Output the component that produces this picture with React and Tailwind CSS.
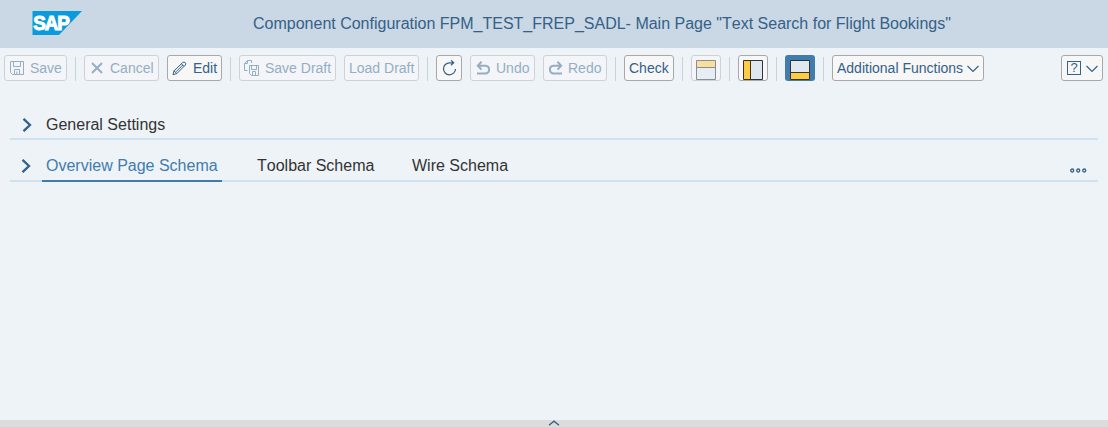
import React from "react";

function Button({ className = "", disabled = false, children }) {
  const tone = disabled
    ? "border-[#cfd2d5] bg-[#f3f5f9] text-[#95aec4]"
    : "border-[#a6a8aa] bg-[#f7f7f8] text-[#346187]";
  return (
    <button
      className={`flex h-[26px] shrink-0 items-center rounded-[3px] border text-sm leading-4 whitespace-nowrap ${tone} ${className}`}
    >
      {children}
    </button>
  );
}

function Separator() {
  return <div className="mt-[2px] h-6 w-px shrink-0 bg-[#cbd1d6]" />;
}

function Icon({ w, h, className = "", children, sw = 1 }) {
  return (
    <svg
      width={w}
      height={h}
      viewBox={`0 0 ${w} ${h}`}
      fill="none"
      stroke="currentColor"
      strokeWidth={sw}
      className={`shrink-0 ${className}`}
    >
      {children}
    </svg>
  );
}

function Logo() {
  return (
    <svg width="50" height="24" viewBox="0 0 50 24" className="shrink-0">
      <path d="M0.5 0H50L27 24H0.5Z" fill="#0a9bdc" />
      <text
        x="1.2"
        y="19.4"
        textLength="35.4"
        lengthAdjust="spacingAndGlyphs"
        fill="#fff"
        stroke="#fff"
        strokeWidth="1"
        className="font-['Liberation_Sans',sans-serif] text-[20px] font-bold tracking-[-1.2px]"
      >
        SAP
      </text>
    </svg>
  );
}

function LayoutIcon({ band, stroke, fill, pane }) {
  const bands = {
    top: [<rect key="b" x="0.5" y="0.5" width="19" height="7" />, "M0 7.5H20"],
    left: [<rect key="b" x="0.5" y="0.5" width="7" height="19" />, "M7.5 0V20"],
    bottom: [<rect key="b" x="0.5" y="12.5" width="19" height="7" />, "M0 12.5H20"],
  };
  return (
    <svg width="20" height="20" viewBox="0 0 20 20" className="mt-1 shrink-0">
      <rect x="0.5" y="0.5" width="19" height="19" fill={pane} />
      <g fill={fill}>{bands[band][0]}</g>
      <path d={`M0.5 0.5H19.5V19.5H0.5Z ${bands[band][1]}`} fill="none" stroke={stroke} />
    </svg>
  );
}

function Chevron({ className = "" }) {
  return (
    <Icon w={10} h={14} sw={2.3} className={`text-[#346187] ${className}`}>
      <path d="M1.5 0.8 8 7 1.5 13.2" />
    </Icon>
  );
}

export default function App() {
  return (
    <div className="flex h-[427px] w-[1108px] flex-col overflow-hidden bg-[#eef3f8] font-['Liberation_Sans',Arial,sans-serif] text-[#333] [font-kerning:none]">
      <header className="flex h-12 shrink-0 bg-[#cad7e5] pt-[11px] pl-8">
        <Logo />
        <h1 className="mt-1 ml-[171px] text-base leading-[18px] whitespace-nowrap text-[#346187]">
          Component Configuration FPM_TEST_FREP_SADL- Main Page "Text Search for Flight Bookings"
        </h1>
      </header>

      <div className="flex h-[43px] shrink-0 gap-2 pt-[7px] pr-[5px] pl-1">
        <Button disabled className="w-[63px] pl-[5px]">
          <Icon w={14} h={14} className="mr-1.5">
            <path d="M.5.5H13.5V13.5H2.5L.5 11.5ZM3.5.5V5.5H10.5V.5M4.5 13.5V8.5H9.5V13.5M6.8 10.5V13" />
          </Icon>
          Save
        </Button>
        <Separator />
        <Button disabled className="w-[75px] pl-[6px]">
          <Icon w={12} h={12} sw={2} className="mr-[7px]">
            <path d="M1 1 11 11M11 1 1 11" />
          </Icon>
          Cancel
        </Button>
        <Button className="w-[55px] pl-1">
          <Icon w={15} h={15} className="mr-1.5">
            <path d="M1 13.7 2 9.8 10.7 1.6Q12 .5 13.2 1.6T13.2 4.2L4.8 12.6ZM2 9.8 4.8 12.6M9.5 2.8 12 5.3M4 10.8 10.8 4" />
          </Icon>
          Edit
        </Button>
        <Separator />
        <Button disabled className="w-[97px] pl-1">
          <Icon w={16} h={16} className="mr-[5px]">
            <path d="M5.5 5.5H14.5V15.5H7.5L5.5 13.5ZM7.5 5.5V9.5H12.5V5.5M8.5 15.5V11.5H11.5V15.5M3.5 10.5H.5V3.5L3.5.5H7.5V3M.5 3.5H3.5V.5" />
          </Icon>
          Save Draft
        </Button>
        <Button disabled className="w-[75px] pl-1">
          Load Draft
        </Button>
        <Separator />
        <Button className="w-[26px] pl-[5px]">
          <Icon w={15} h={16} sw={1.2}>
            <path d="M11.2 2.8H7.5A6 6 0 1 0 13.5 9M9 .3 11.7 2.8 9 5.3" />
          </Icon>
        </Button>
        <Button disabled className="w-[65px] pl-[5px]">
          <Icon w={14} h={14} sw={2} className="mr-[6px]">
            <path d="M5.5.8 1.8 4.7 5.5 8.6M2 4.7H9.2C14.4 4.7 14.4 12.5 9.2 12.5H1" />
          </Icon>
          Undo
        </Button>
        <Button disabled className="w-16 pl-[5px]">
          <Icon w={14} h={14} sw={2} className="mr-[5px]">
            <path d="M8.5.8 12.2 4.7 8.5 8.6M12 4.7H4.8C-.4 4.7-.4 12.5 4.8 12.5H13" />
          </Icon>
          Redo
        </Button>
        <Separator />
        <Button className="w-[50px] pl-1">Check</Button>
        <Separator />
        <Button disabled className="w-[30px] justify-center">
          <LayoutIcon band="top" stroke="#8b8e92" fill="#f8e09a" pane="#e6edf5" />
        </Button>
        <Separator />
        <Button className="w-[30px] justify-center">
          <LayoutIcon band="left" stroke="#333" fill="#ffcc3d" pane="#dfe8f1" />
        </Button>
        <Separator />
        <button className="flex h-[26px] w-[30px] shrink-0 items-center justify-center rounded-[3px] bg-[#427cac]">
          <LayoutIcon band="bottom" stroke="#333" fill="#ffcc3d" pane="#dfe8f1" />
        </button>
        <Separator />
        <Button className="w-[152px] pl-1">
          Additional Functions
          <Icon w={12} h={8} sw={1.2} className="mt-[2px] ml-1">
            <path d="M.5 1 6 6.5 11.5 1" />
          </Icon>
        </Button>
        <Button className="ml-auto w-[42px] pl-[5px]">
          <span className="flex h-[14px] w-[14px] items-center justify-center border border-[#346187] text-[13px] leading-3">
            ?
          </span>
          <Icon w={12} h={8} sw={1.2} className="mt-[2px] ml-[5px]">
            <path d="M.5 1 6 6.5 11.5 1" />
          </Icon>
        </Button>
      </div>

      <main className="flex grow flex-col px-[10px] pt-[19px] text-base leading-[18px]">
        <section className="flex h-[30px] shrink-0 border-b-2 border-[#d0e1f0]">
          <Chevron className="mt-2 ml-3" />
          <h2 className="mt-1.5 ml-[14px]">General Settings</h2>
        </section>
        <nav className="flex h-[42px] shrink-0 border-b-2 border-[#d0e1f0]">
          <Chevron className="mt-[19px] ml-[11px]" />
          <div className="mt-[17px] ml-[11px] h-[25px] w-[180px] shrink-0 border-b-2 border-[#427cac] pl-1 text-[#427cac]">
            Overview Page Schema
          </div>
          <div className="mt-[17px] ml-[35px] w-[155px] shrink-0">Toolbar Schema</div>
          <div className="mt-[17px]">Wire Schema</div>
          <Icon w={17} h={5} sw={1.3} className="mt-[28px] mr-[11px] ml-auto text-[#346187]">
            <circle cx="2.2" cy="2.5" r="1.5" />
            <circle cx="8.2" cy="2.5" r="1.5" />
            <circle cx="14.2" cy="2.5" r="1.5" />
          </Icon>
        </nav>
      </main>

      <footer className="flex h-[7px] shrink-0 justify-center bg-[#dcdcdc]">
        <Icon w={12} h={7} sw={1.3} className="text-[#346187]">
          <path d="M1 5.2 6 1.2 11 5.2" />
        </Icon>
      </footer>
    </div>
  );
}
